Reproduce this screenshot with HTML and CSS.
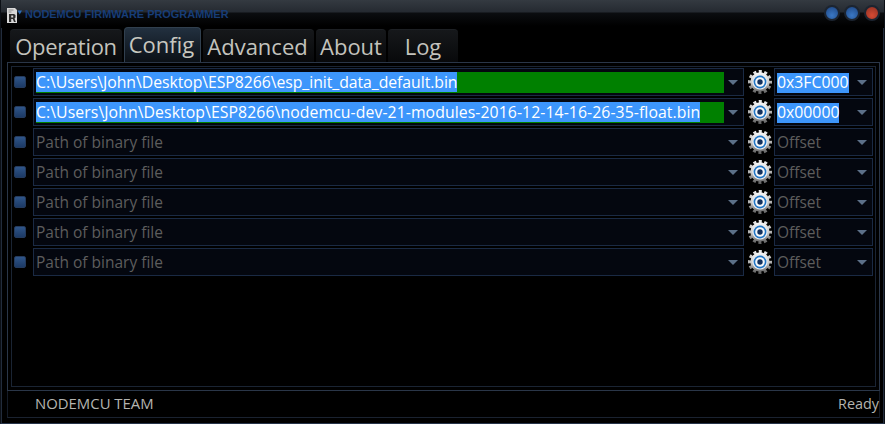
FILE: index.html
```html
<!DOCTYPE html>
<html lang="en">
<head>
<meta charset="utf-8">
<title>NodeMCU Firmware Programmer</title>
<link rel="stylesheet" href="styles.css">
</head>
<body>
<svg class="defs" width="0" height="0" aria-hidden="true">
  <defs>
    <linearGradient id="metal" x1="0" y1="0" x2="0" y2="1">
      <stop offset="0" stop-color="#fafafa"/><stop offset=".55" stop-color="#c8c8c8"/><stop offset="1" stop-color="#6a6a6a"/>
    </linearGradient>
    <linearGradient id="metalTeeth" gradientUnits="userSpaceOnUse" x1="0" y1="0" x2="0" y2="24">
      <stop offset="0" stop-color="#efefef"/><stop offset=".5" stop-color="#b4b4b4"/><stop offset="1" stop-color="#5c5c5c"/>
    </linearGradient>
    <symbol id="gear" viewBox="0 0 24 24">
      <circle cx="12" cy="12" r="10.3" fill="none" stroke="url(#metalTeeth)" stroke-width="3.4" stroke-dasharray="3 2.39" stroke-dashoffset="1.5"/>
      <circle cx="12" cy="12" r="9.7" fill="url(#metal)"/>
      <circle cx="12" cy="12" r="7.6" fill="#e6ebf1"/>
      <circle cx="12" cy="12" r="6.4" fill="#1f74c4"/>
      <circle cx="12" cy="12" r="4.8" fill="#f4f7fa"/>
      <circle cx="12" cy="12" r="2.7" fill="#12305c"/>
    </symbol>
  </defs>
</svg>
<div class="window">
  <header class="titlebar">
    <svg class="app-icon" viewBox="0 0 16 16" aria-hidden="true">
      <path d="M0 0h8l2 2v13H0z" fill="#d8d8d8"/>
      <path d="M1.500 1.500h5v1h-5zM1.500 3.500h3v1h-3z" fill="#8a8a8a"/>
      <path d="M2 6h5l1.500 1v2.500l-1 1 1.300 3.500H7L5.800 11H4.200v3H2z" fill="#2c2c2c"/>
      <path d="M4.200 7.500v2h2v-2z" fill="#d8d8d8"/>
      <path d="M10.500 2.500h4.500L12.700 6.500z" fill="#2c6cb8"/>
    </svg>
    <span class="title-text">NODEMCU FIRMWARE PROGRAMMER</span>
    <div class="win-buttons">
      <span class="win-btn"></span><span class="win-btn"></span><span class="win-btn close"></span>
    </div>
  </header>
  <nav class="tabs">
    <span class="tab t-op">Operation</span>
    <span class="tab active t-cfg">Config</span>
    <span class="tab t-adv">Advanced</span>
    <span class="tab t-abt">About</span>
    <span class="tab t-log">Log</span>
  </nav>
  <main class="panel">
    <div class="inner">
      <div class="row">
        <span class="check-cell"><span class="check"></span></span>
        <div class="combo path">
          <div class="field progress"><span class="sel sel-init">C:\Users\John\Desktop\ESP8266\esp_init_data_default.bin</span></div>
          <span class="arrow"></span>
        </div>
        <span class="gear-cell"><svg class="gear"><use href="#gear"/></svg></span>
        <div class="combo offset">
          <div class="field"><span class="sel">0x3FC000</span></div>
          <span class="arrow"></span>
        </div>
      </div>
      <div class="row">
        <span class="check-cell"><span class="check"></span></span>
        <div class="combo path">
          <div class="field progress"><span class="sel sel-fw">C:\Users\John\Desktop\ESP8266\nodemcu-dev-21-modules-2016-12-14-16-26-35-float.bin</span></div>
          <span class="arrow"></span>
        </div>
        <span class="gear-cell"><svg class="gear"><use href="#gear"/></svg></span>
        <div class="combo offset">
          <div class="field"><span class="sel">0x00000</span></div>
          <span class="arrow"></span>
        </div>
      </div>
      <div class="row">
        <span class="check-cell"><span class="check"></span></span>
        <div class="combo path"><div class="field"><span class="hint">Path of binary file</span></div><span class="arrow"></span></div>
        <span class="gear-cell"><svg class="gear"><use href="#gear"/></svg></span>
        <div class="combo offset"><div class="field"><span class="hint">Offset</span></div><span class="arrow"></span></div>
      </div>
      <div class="row">
        <span class="check-cell"><span class="check"></span></span>
        <div class="combo path"><div class="field"><span class="hint">Path of binary file</span></div><span class="arrow"></span></div>
        <span class="gear-cell"><svg class="gear"><use href="#gear"/></svg></span>
        <div class="combo offset"><div class="field"><span class="hint">Offset</span></div><span class="arrow"></span></div>
      </div>
      <div class="row">
        <span class="check-cell"><span class="check"></span></span>
        <div class="combo path"><div class="field"><span class="hint">Path of binary file</span></div><span class="arrow"></span></div>
        <span class="gear-cell"><svg class="gear"><use href="#gear"/></svg></span>
        <div class="combo offset"><div class="field"><span class="hint">Offset</span></div><span class="arrow"></span></div>
      </div>
      <div class="row">
        <span class="check-cell"><span class="check"></span></span>
        <div class="combo path"><div class="field"><span class="hint">Path of binary file</span></div><span class="arrow"></span></div>
        <span class="gear-cell"><svg class="gear"><use href="#gear"/></svg></span>
        <div class="combo offset"><div class="field"><span class="hint">Offset</span></div><span class="arrow"></span></div>
      </div>
      <div class="row">
        <span class="check-cell"><span class="check"></span></span>
        <div class="combo path"><div class="field"><span class="hint">Path of binary file</span></div><span class="arrow"></span></div>
        <span class="gear-cell"><svg class="gear"><use href="#gear"/></svg></span>
        <div class="combo offset"><div class="field"><span class="hint">Offset</span></div><span class="arrow"></span></div>
      </div>
    </div>
  </main>
  <footer class="status">
    <span class="team">NODEMCU TEAM</span>
    <span class="ready">Ready</span>
  </footer>
</div>
</body>
</html>
```
FILE: styles.css
```css
* { box-sizing: border-box; }
html, body { margin: 0; padding: 0; height: 100%; background: #000; overflow: hidden; }
body { font-family: "Open Sans", "Noto Sans", "DejaVu Sans", sans-serif; }
.defs { position: absolute; }
.window {
  width: 885px; height: 424px; display: flex; flex-direction: column;
  background: #000;
  border-left: 1px solid #0c1016; border-right: 1px solid #0c1016; border-bottom: 1px solid #26344a;
  box-shadow: inset 1px 0 0 #222c3c, inset -1px 0 0 #222c3c;
}
.titlebar {
  height: 28px; flex: none; display: flex; align-items: flex-start;
  padding: 7px 4px 0 6px;
  background: linear-gradient(#343a41 0, #252a31 12px, #0b0d10 13px, #000 26px);
}
.app-icon { width: 16px; height: 16px; flex: none; margin-top: 1px; }
.title-text {
  margin-left: 2px; font-family: "Liberation Sans", sans-serif; font-size: 10.95px; font-weight: 700; line-height: 14px;
  color: #173d77; white-space: nowrap;
}
.win-buttons { margin-left: auto; display: flex; gap: 4px; margin-top: -2px; }
.win-btn {
  width: 16px; height: 16px; border-radius: 50%; border: 2px solid #1c2430;
  background: radial-gradient(circle at 50% 70%, #3a78c4, #234f8f 80%);
}
.win-btn.close { background: radial-gradient(circle at 50% 70%, #d44a33, #9c3526 80%); }
.tabs { height: 34px; flex: none; display: flex; align-items: flex-end; padding-left: 9px; gap: 2px; }
.tab {
  height: 33px; display: flex; align-items: center; justify-content: center;
  font-size: 22px; color: #c3c3bd; white-space: nowrap;
  background: linear-gradient(#16181b, #08090b);
  border-radius: 4px 4px 0 0;
  border-top: 1px solid #1d2024;
}
.t-op { width: 112px; letter-spacing: -.3px; }
.t-cfg { width: 77px; padding-right: 2px; }
.t-adv { width: 111px; padding-right: 2px; }
.t-abt { width: 70px; }
.t-log { width: 70px; }
.tab.active {
  height: 35px; margin-top: -2px; position: relative;
  background: linear-gradient(#22303f, #0b1016);
  border: 1px solid #31404f; border-bottom: 0;
  color: #c8c8c0;
  padding-bottom: 2px;
}
.panel {
  margin: 0 4px 0 6px; height: 329px; flex: none;
  padding: 3px;
  border: 1px solid #2a3648;
}
.inner {
  height: 100%;
  display: flex; flex-direction: column; gap: 2px;
  padding: 1px 0 0 0;
  border: 1px solid #1a2433;
}
.row { display: flex; height: 28px; flex: none; gap: 1px; }
.check-cell { width: 20px; flex: none; display: flex; align-items: center; padding-left: 2px; }
.check {
  width: 12px; height: 12px; border-radius: 2px; border: 1px solid #243a5c;
  background: linear-gradient(#2f5589, #1c3a66);
}
.combo {
  display: flex; align-items: stretch; height: 28px; padding: 3px 2px 2px;
  border: 1px solid #1a2a44; background: #04070f;
}
.path { width: 711px; flex: none; }
.offset { width: 99px; flex: none; }
.field { flex: 1; min-width: 0; display: flex; align-items: center; font-size: 15.8px; line-height: 20px; white-space: nowrap; }
.progress { background: #008000; align-items: flex-start; }
.sel { background: #3d96fb; color: #fff; height: 20px; display: flex; align-items: center; padding-bottom: 1px; }
.sel-init { letter-spacing: -.055px; }
.sel-fw { letter-spacing: .077px; }
.hint { color: #5d5d5d; font-size: 15.5px; padding-bottom: 2px; }
.arrow { width: 17px; flex: none; position: relative; }
.arrow::after {
  content: ""; position: absolute; left: 4px; top: 8px;
  border-left: 5px solid transparent; border-right: 5px solid transparent; border-top: 5px solid #5c7088;
}
.gear-cell { width: 28px; flex: none; display: flex; align-items: center; justify-content: center; padding: 0 0 1px 1px; }
.gear { width: 24px; height: 24px; }
.status {
  flex: none; height: 27px; margin: 0 4px 0 6px; padding: 0 0 2px 27px;
  display: flex; align-items: center; justify-content: space-between;
  font-size: 14.9px; color: #b4b4b0;
  border-bottom: 1px solid #1a2230;
  border-left: 1px solid #141b27;
  border-right: 1px solid #141b27;
}
.ready { font-size: 14.4px; }
```
